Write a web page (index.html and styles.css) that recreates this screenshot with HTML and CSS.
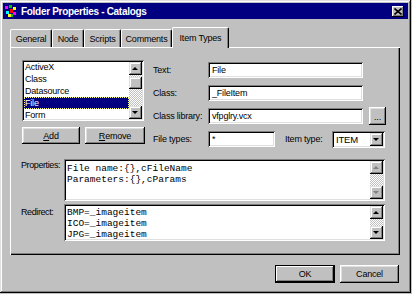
FILE: index.html
```html
<!DOCTYPE html>
<html lang="en">
<head>
    <meta charset="UTF-8">
    <title>Folder Properties - Catalogs</title>
    <link rel="stylesheet" href="styles.css">
</head>
<body>
    <div class="window">
        <!-- Barra de título -->
        <div class="titlebar">
            <svg class="title-icon" width="14" height="14" viewBox="0 0 14 14">
                <rect x="1" y="2" width="3" height="3" fill="#ff00ff"/>
                <rect x="5" y="1" width="3" height="3" fill="#00c000"/>
                <rect x="9" y="3" width="3" height="3" fill="#ffff00"/>
                <rect x="2" y="7" width="3" height="3" fill="#00ffff"/>
                <rect x="6" y="5" width="3" height="4" fill="#ff0000"/>
                <rect x="9" y="8" width="3" height="3" fill="#ff00ff"/>
                <rect x="4" y="10" width="3" height="3" fill="#ffff00"/>
                <rect x="7" y="10" width="2" height="3" fill="#00c000"/>
            </svg>
            <span class="title-text">Folder Properties - Catalogs</span>
            <span class="close-btn">
                <svg width="8" height="7" viewBox="0 0 8 7">
                    <path d="M0.5 0.5 L7.5 6.5 M7.5 0.5 L0.5 6.5" stroke="#000" stroke-width="1.6"/>
                </svg>
            </span>
        </div>

        <div class="dialog">
            <!-- Pestañas -->
            <div class="tabs">
                <div class="tab tab-general">General</div>
                <div class="tab tab-node">Node</div>
                <div class="tab tab-scripts">Scripts</div>
                <div class="tab tab-comments">Comments</div>
                <div class="tab tab-item active">Item Types</div>
            </div>

            <div class="panel">
                <div class="top-area">
                    <div class="list-col">
                        <div class="listbox">
                            <ul class="list-items">
                                <li>ActiveX</li>
                                <li>Class</li>
                                <li>Datasource</li>
                                <li class="selected"><span>File</span></li>
                                <li>Form</li>
                            </ul>
                            <div class="scrollbar">
                                <div class="sb-btn arrow-up"></div>
                                <div class="sb-track">
                                    <div class="sb-space-top"></div>
                                    <div class="sb-thumb"></div>
                                </div>
                                <div class="sb-btn arrow-down"></div>
                            </div>
                        </div>
                        <div class="list-buttons">
                            <div class="btn btn-add"><u>A</u>dd</div>
                            <div class="btn btn-remove"><u>R</u>emove</div>
                        </div>
                    </div>

                    <div class="fields">
                        <div class="field-row">
                            <span class="field-label">Text:</span>
                            <div class="input input-wide">File</div>
                        </div>
                        <div class="field-row">
                            <span class="field-label">Class:</span>
                            <div class="input input-wide">_FileItem</div>
                        </div>
                        <div class="field-row">
                            <span class="field-label">Class library:</span>
                            <div class="input input-wide">vfpglry.vcx</div>
                            <div class="btn btn-dots">...</div>
                        </div>
                        <div class="field-row">
                            <span class="field-label">File types:</span>
                            <div class="input input-short">*</div>
                            <span class="field-label label-itemtype">Item type:</span>
                            <div class="combo">
                                <span class="combo-text">ITEM</span>
                                <div class="sb-btn arrow-down"></div>
                            </div>
                        </div>
                    </div>
                </div>

                <div class="memo-row memo-properties">
                    <span class="memo-label">Properties:</span>
                    <div class="memo">
                        <div class="memo-text">File name:{},cFileName<br>Parameters:{},cParams</div>
                        <div class="scrollbar">
                            <div class="sb-btn arrow-up disabled"></div>
                            <div class="sb-track"></div>
                            <div class="sb-btn arrow-down disabled"></div>
                        </div>
                    </div>
                </div>

                <div class="memo-row memo-redirect">
                    <span class="memo-label">Redirect:</span>
                    <div class="memo">
                        <div class="memo-text">BMP=_imageitem<br>ICO=_imageitem<br>JPG=_imageitem</div>
                        <div class="scrollbar">
                            <div class="sb-btn arrow-up"></div>
                            <div class="sb-track"></div>
                            <div class="sb-btn arrow-down"></div>
                        </div>
                    </div>
                </div>
            </div>

            <div class="dialog-buttons">
                <div class="btn btn-ok">OK</div>
                <div class="btn btn-cancel">Cancel</div>
            </div>
        </div>
    </div>
</body>
</html>
```

FILE: styles.css
```css
body {
    margin: 0;
    background-color: #c0c0c0;
    font-family: "Liberation Sans", Arial, sans-serif;
    font-size: 9px;
    letter-spacing: -0.2px;
    color: #000;
}
.window {
    width: 411px;
    height: 293px;
    box-sizing: border-box;
    padding: 3px;
    background-color: #c0c0c0;
    box-shadow: inset -1px -1px #000, inset 1px 1px #dfdfdf, inset -2px -2px #808080, inset 2px 2px #fff;
}
.titlebar {
    height: 16px;
    display: flex;
    align-items: center;
    background-color: #000080;
    color: #fff;
}
.title-icon {
    margin-left: 1px;
}
.title-text {
    margin-left: 3px;
    font-size: 10px;
    font-weight: bold;
    letter-spacing: -0.3px;
}
.close-btn {
    margin-left: auto;
    margin-right: 4px;
    width: 12px;
    height: 11px;
    display: flex;
    align-items: center;
    justify-content: center;
    background-color: #c0c0c0;
    box-shadow: inset -1px -1px #000, inset 1px 1px #fff, inset -2px -2px #808080;
}
.dialog {
    padding: 8px 8px 0 7px;
}

/* Pestañas */
.tabs {
    height: 20px;
    display: flex;
    align-items: flex-end;
    position: relative;
    z-index: 1;
}
.tab {
    height: 18px;
    box-sizing: border-box;
    display: flex;
    align-items: center;
    justify-content: center;
    border-top: 1px solid #fff;
    border-left: 1px solid #fff;
    border-right: 1px solid #000;
    border-radius: 2px 2px 0 0;
    box-shadow: inset -1px 0 #808080;
    padding-top: 1px;
}
.tab-general { width: 42px; }
.tab-node { width: 32px; }
.tab-scripts { width: 37px; }
.tab-comments { width: 51px; }
.tab-item { width: 57px; }
.tab.active {
    height: 21px;
    margin-bottom: -1px;
    background-color: #c0c0c0;
    padding-bottom: 2px;
}
.panel {
    width: 390px;
    height: 208px;
    box-sizing: border-box;
    padding: 13px 12px 0 12px;
    box-shadow: inset 1px 1px #fff, inset -1px -1px #000, inset -2px -2px #808080;
}
.top-area {
    display: flex;
}
.list-col {
    width: 123px;
}
.listbox {
    width: 122px;
    height: 61px;
    box-sizing: border-box;
    padding: 2px;
    display: flex;
    background-color: #fff;
    box-shadow: inset 1px 1px #808080, inset -1px -1px #fff, inset 2px 2px #000, inset -2px -2px #dfdfdf;
}
.list-items {
    flex: 1;
    margin: -1px 0 0 0;
    padding: 0;
    list-style: none;
    overflow: hidden;
}
.list-items li {
    height: 12px;
    line-height: 12px;
    padding-left: 1px;
}
.list-items li.selected {
    background-color: #000080;
    color: #fff;
    outline: 1px dotted #ffff80;
    outline-offset: -1px;
}
.scrollbar {
    width: 13px;
    display: flex;
    flex-direction: column;
}
.sb-btn {
    width: 13px;
    height: 13px;
    flex: none;
    box-sizing: border-box;
    position: relative;
    background-color: #c0c0c0;
    box-shadow: inset -1px -1px #000, inset 1px 1px #dfdfdf, inset -2px -2px #808080, inset 2px 2px #fff;
}
.sb-btn::after {
    content: "";
    position: absolute;
    left: 3px;
    top: 5px;
    border-left: 3.5px solid transparent;
    border-right: 3.5px solid transparent;
}
.arrow-up::after {
    border-bottom: 3.5px solid #000;
}
.arrow-down::after {
    border-top: 3.5px solid #000;
}
.sb-btn.disabled::after {
    border-top-color: #808080;
    border-bottom-color: #808080;
}
.sb-track {
    flex: 1;
    background: repeating-conic-gradient(#c0c0c0 0 25%, #fff 0 50%) 0 0 / 2px 2px;
}
.sb-space-top {
    height: 2px;
}
.sb-thumb {
    height: 12px;
    background-color: #c0c0c0;
    box-shadow: inset -1px -1px #000, inset 1px 1px #dfdfdf, inset -2px -2px #808080, inset 2px 2px #fff;
}
.list-buttons {
    margin-top: 6px;
    display: flex;
    gap: 5px;
}
.btn {
    height: 17px;
    box-sizing: border-box;
    display: flex;
    align-items: center;
    justify-content: center;
    background-color: #c0c0c0;
    box-shadow: inset -1px -1px #000, inset 1px 1px #fff, inset -2px -2px #808080, inset 2px 2px #dfdfdf;
}
.btn-add { width: 58px; }
.btn-remove { width: 60px; }

/* Campos de la derecha */
.fields {
    margin-left: 8px;
    margin-top: 2px;
    display: flex;
    flex-direction: column;
    gap: 7px;
}
.field-row {
    height: 16px;
    display: flex;
    align-items: center;
}
.field-label {
    width: 55px;
    flex: none;
}
.input {
    height: 16px;
    box-sizing: border-box;
    padding: 0 4px;
    display: flex;
    align-items: center;
    background-color: #fff;
    box-shadow: inset 1px 1px #808080, inset -1px -1px #fff, inset 2px 2px #000, inset -2px -2px #dfdfdf;
}
.input-wide { width: 155px; }
.input-short { width: 67px; }
.btn-dots {
    width: 17px;
    height: 18px;
    margin: 0 0 0 6px;
    padding-top: 2px;
}
.label-itemtype {
    width: 47px;
    margin-left: 10px;
}
.combo {
    width: 53px;
    height: 17px;
    box-sizing: border-box;
    padding: 2px;
    display: flex;
    align-items: center;
    background-color: #fff;
    box-shadow: inset 1px 1px #808080, inset -1px -1px #fff, inset 2px 2px #000, inset -2px -2px #dfdfdf;
}
.combo-text {
    flex: 1;
    padding-left: 2px;
    font-size: 9.5px;
}

/* Cuadros de texto de varias líneas */
.memo-row {
    display: flex;
    margin-left: -1px;
}
.memo-properties {
    margin-top: 12px;
}
.memo-redirect {
    margin-top: 3px;
}
.memo-label {
    width: 43px;
    flex: none;
    letter-spacing: -0.4px;
}
.memo-properties .memo-label {
    padding-top: 1px;
}
.memo-redirect .memo-label {
    padding-top: 3px;
}
.memo {
    width: 321px;
    box-sizing: border-box;
    padding: 2px;
    display: flex;
    background-color: #fff;
    box-shadow: inset 1px 1px #808080, inset -1px -1px #fff, inset 2px 2px #000, inset -2px -2px #dfdfdf;
}
.memo-properties .memo { height: 42px; }
.memo-redirect .memo { height: 37px; }
.memo-text {
    flex: 1;
    padding: 2px 0 0 1px;
    font-family: "Liberation Mono", "Courier New", monospace;
    font-size: 9.5px;
    letter-spacing: 0;
    line-height: 11px;
    overflow: hidden;
}
.memo-redirect .memo-text {
    padding-top: 1px;
}

.dialog-buttons {
    margin-top: 10px;
    padding-right: 1px;
    display: flex;
    justify-content: flex-end;
    gap: 5px;
}
.btn-ok,
.btn-cancel {
    height: 18px;
}
.btn-ok {
    width: 60px;
    box-shadow: inset 0 0 0 1px #000, inset -2px -2px #000, inset 2px 2px #fff, inset -3px -3px #808080;
}
.btn-cancel {
    width: 59px;
}
```
